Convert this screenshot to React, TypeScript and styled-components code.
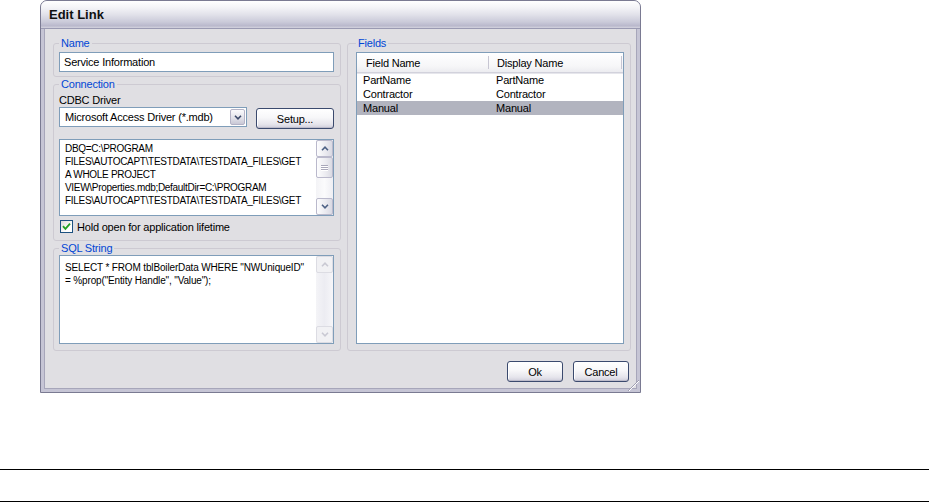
import React from 'react';
import styled, { createGlobalStyle } from 'styled-components';

const GlobalStyle = createGlobalStyle`
  html, body {
    margin: 0;
    padding: 0;
    background: #fff;
  }
  body {
    font-family: "Liberation Sans", Arial, sans-serif;
    font-size: 11px;
    letter-spacing: -0.2px;
    color: #000;
  }
`

const Page = styled.div`
  width: 929px;
  height: 502px;
  overflow: hidden;
`

const Window = styled.div`
  position: relative;
  margin-left: 40px;
  width: 601px;
  height: 393px;
  box-sizing: border-box;
  border: 1px solid #7a7a92;
  border-radius: 7px 7px 0 0;
  background: #c6c5d5;
  display: flex;
  flex-direction: column;
  overflow: hidden;
`

const TitleBar = styled.div`
  flex: none;
  height: 27px;
  display: flex;
  align-items: center;
  padding-left: 8px;
  border-bottom: 1px solid #9a9ab2;
  background: linear-gradient(to bottom, #ffffff 0%, #f3f3f7 25%, #e2e2ea 50%, #cacad9 78%, #b9b8cc 92%, #d4d4df 100%);
  font-weight: bold;
  font-size: 13px;
  letter-spacing: 0;
  color: #101010;
`

const Body = styled.div`
  flex: 1;
  margin: 0 3px 3px 3px;
  background: #e0dfe3;
  border: 1px solid #a7a6ba;
  border-top: none;
  padding: 8px 5px 0 8px;
  display: flex;
  flex-direction: column;
`

const Columns = styled.div`
  display: grid;
  grid-template-columns: 288px 284px;
  column-gap: 6px;
  height: 314px;
`

const Column = styled.div`
  display: flex;
  flex-direction: column;
  gap: 1px;
  min-height: 0;
`

const Group = styled.fieldset<{ $fill?: boolean; $pad?: string }>`
  margin: 0;
  min-width: 0;
  border: 1px solid #cdcad2;
  border-radius: 3px;
  padding: ${p => p.$pad ?? '0 6px 4px 5px'};
  display: flex;
  flex-direction: column;
  flex: ${p => (p.$fill ? '1' : 'none')};
  min-height: 0;
`

const Legend = styled.legend`
  color: #0046d5;
  padding: 0 2px;
  margin-left: 0;
  line-height: 13px;
`

const TextInput = styled.div`
  margin-top: 2px;
  height: 20px;
  box-sizing: border-box;
  border: 1px solid #7f9db9;
  background: #fff;
  display: flex;
  align-items: center;
  padding-left: 4px;
`

const Label = styled.div`
  margin-top: 3px;
  line-height: 13px;
`

const DriverRow = styled.div`
  display: flex;
  align-items: flex-start;
  height: 22px;
`

const Select = styled.div`
  width: 188px;
  height: 20px;
  box-sizing: border-box;
  border: 1px solid #7f9db9;
  background: #fff;
  display: flex;
  align-items: center;
  padding: 1px;
`

const SelectText = styled.div`
  flex: 1;
  padding-left: 4px;
  white-space: nowrap;
  overflow: hidden;
`

const DropButton = styled.div`
  width: 15px;
  height: 16px;
  box-sizing: border-box;
  border: 1px solid #b4b3c6;
  border-radius: 2px;
  background: linear-gradient(to bottom, #fbfbfd, #e3e3ea 55%, #c9c8d6);
  display: flex;
  align-items: center;
  justify-content: center;
`

const Button = styled.button<{ $w: number; $top?: number }>`
  width: ${p => p.$w}px;
  height: 21px;
  margin-top: ${p => p.$top ?? 0}px;
  padding: 0;
  font: inherit;
  letter-spacing: inherit;
  color: #000;
  border: 1px solid #3b4a6e;
  border-radius: 3px;
  background: linear-gradient(to bottom, #ffffff 0%, #f7f7f9 45%, #e6e5ec 80%, #cfcedb 100%);
  box-shadow: inset 0 -1px 0 #bdbccb, inset 1px 0 0 #fff;
`

const SetupButton = styled(Button)`
  margin-left: auto;
`

const TextBox = styled.div<{ $h?: number; $fill?: boolean; $top: number }>`
  margin-top: ${p => p.$top}px;
  height: ${p => (p.$h ? `${p.$h}px` : 'auto')};
  flex: ${p => (p.$fill ? '1' : 'none')};
  box-sizing: border-box;
  border: 1px solid #7f9db9;
  background: #fff;
  display: flex;
  min-height: 0;
`

const TextLines = styled.div<{ $padTop: number; $size?: number; $spacing?: number }>`
  flex: 1;
  min-width: 0;
  overflow: hidden;
  padding: ${p => p.$padTop}px 2px 0 5px;
  line-height: 13px;
  font-size: ${p => p.$size ?? 11}px;
  letter-spacing: ${p => p.$spacing ?? -0.2}px;
  white-space: nowrap;
`

const ScrollBar = styled.div<{ $disabled?: boolean }>`
  width: 17px;
  flex: none;
  display: flex;
  flex-direction: column;
  background: ${p => (p.$disabled
    ? 'linear-gradient(to right, #f4f4f7, #ececf2 50%, #f6f6f9)'
    : 'linear-gradient(to right, #f3f3f6, #fbfbfc 50%, #eeeef3)')};
`

const ScrollButton = styled.div<{ $disabled?: boolean }>`
  height: 17px;
  box-sizing: border-box;
  border: 1px solid ${p => (p.$disabled ? '#dcdce3' : '#bab9cc')};
  border-radius: 2px;
  background: ${p => (p.$disabled
    ? '#f1f1f4'
    : 'linear-gradient(to right, #fdfdfe, #e9e9ef 60%, #d9d9e3)')};
  display: flex;
  align-items: center;
  justify-content: center;
`

const Thumb = styled.div`
  height: 21px;
  box-sizing: border-box;
  border: 1px solid #bab9cc;
  border-radius: 2px;
  background: linear-gradient(to right, #fdfdfe, #ebebf0 60%, #dadae3);
  display: flex;
  flex-direction: column;
  align-items: center;
  justify-content: center;
  gap: 1px;
`

const GripLine = styled.div`
  width: 7px;
  height: 1px;
  background: #a9a8ba;
  box-shadow: 0 1px 0 #fff;
`

const Track = styled.div`
  flex: 1;
`

const CheckRow = styled.div`
  margin-top: 4px;
  display: flex;
  align-items: center;
  gap: 4px;
  height: 13px;
  padding-left: 1px;
`

const CheckBox = styled.div`
  width: 13px;
  height: 13px;
  box-sizing: border-box;
  border: 1px solid #1c5180;
  background: linear-gradient(135deg, #dcdcd7, #ffffff 70%);
  display: flex;
  align-items: center;
  justify-content: center;
`

const ListView = styled.div`
  margin-top: 2px;
  flex: 1;
  border: 1px solid #7f9db9;
  background: #fff;
  display: flex;
  flex-direction: column;
`

const Header = styled.div`
  height: 19px;
  display: grid;
  grid-template-columns: 132px 133px;
  background: linear-gradient(to bottom, #ffffff, #f6f6f8 70%, #ececf0);
  border-bottom: 1px solid #d2d2dc;
  box-shadow: 0 1px 0 #e6e6ec;
`

const HeaderCell = styled.div<{ $pad: number }>`
  display: flex;
  align-items: center;
  padding-left: ${p => p.$pad}px;
  border-right: 1px solid #c7c6d3;
  margin: 3px 0;
`

const Row = styled.div<{ $selected?: boolean }>`
  height: 14px;
  display: grid;
  grid-template-columns: 133px 133px;
  align-items: center;
  background: ${p => (p.$selected ? '#b2b4bf' : 'transparent')};
`

const Cell = styled.div`
  padding-left: 6px;
  white-space: nowrap;
`

const Footer = styled.div`
  display: flex;
  justify-content: flex-end;
  gap: 10px;
  margin-top: 10px;
  padding-right: 2px;
`

const Grip = styled.svg`
  position: absolute;
  right: 1px;
  bottom: 1px;
`

const Rule = styled.div<{ $gap: number }>`
  margin-top: ${p => p.$gap}px;
  border-top: 1px solid #000;
`

const Chevron = ({ up, color = '#4d6185' }: { up?: boolean; color?: string }) => (
  <svg width="8" height="5" viewBox="0 0 8 5">
    <path
      d={up ? 'M1 4.2 L4 1.2 L7 4.2' : 'M1 0.8 L4 3.8 L7 0.8'}
      fill="none"
      stroke={color}
      strokeWidth="1.6"
    />
  </svg>
)

const fields = [
  { name: 'PartName', display: 'PartName' },
  { name: 'Contractor', display: 'Contractor' },
  { name: 'Manual', display: 'Manual', selected: true },
]

const connectionLines = [
  'DBQ=C:\\PROGRAM',
  'FILES\\AUTOCAPT\\TESTDATA\\TESTDATA_FILES\\GET',
  'A WHOLE PROJECT',
  'VIEW\\Properties.mdb;DefaultDir=C:\\PROGRAM',
  'FILES\\AUTOCAPT\\TESTDATA\\TESTDATA_FILES\\GET',
]

const sqlLines = [
  'SELECT * FROM tblBoilerData WHERE "NWUniqueID"',
  '= %prop("Entity Handle", "Value");',
]

export default function App() {
  return (
    <Page>
      <GlobalStyle />
      <Window>
        <TitleBar>Edit Link</TitleBar>
        <Body>
          <Columns>
            <Column>
              <Group>
                <Legend>Name</Legend>
                <TextInput>Service Information</TextInput>
              </Group>

              <Group $pad="0 6px 7px 5px">
                <Legend>Connection</Legend>
                <Label>CDBC Driver</Label>
                <DriverRow>
                  <Select>
                    <SelectText>Microsoft Access Driver (*.mdb)</SelectText>
                    <DropButton><Chevron color="#3c4a6a" /></DropButton>
                  </Select>
                  <SetupButton $w={78} $top={1}>Setup...</SetupButton>
                </DriverRow>
                <TextBox $top={10} $h={77}>
                  <TextLines $padTop={2} $size={10} $spacing={-0.3}>
                    {connectionLines.map((l, i) => <div key={i}>{l}</div>)}
                  </TextLines>
                  <ScrollBar>
                    <ScrollButton><Chevron up /></ScrollButton>
                    <Thumb><GripLine /><GripLine /><GripLine /></Thumb>
                    <Track />
                    <ScrollButton><Chevron /></ScrollButton>
                  </ScrollBar>
                </TextBox>
                <CheckRow>
                  <CheckBox>
                    <svg width="9" height="9" viewBox="0 0 9 9">
                      <path d="M1 4.2 L3.4 6.8 L8 1.6" fill="none" stroke="#21a121" strokeWidth="1.8" />
                    </svg>
                  </CheckBox>
                  Hold open for application lifetime
                </CheckRow>
              </Group>

              <Group $fill $pad="0 6px 6px 5px">
                <Legend>SQL String</Legend>
                <TextBox $top={0} $fill>
                  <TextLines $padTop={5} $size={10} $spacing={-0.15}>
                    {sqlLines.map((l, i) => <div key={i}>{l}</div>)}
                  </TextLines>
                  <ScrollBar $disabled>
                    <ScrollButton $disabled><Chevron up color="#c9c9d3" /></ScrollButton>
                    <Track />
                    <ScrollButton $disabled><Chevron color="#c9c9d3" /></ScrollButton>
                  </ScrollBar>
                </TextBox>
              </Group>
            </Column>

            <Column>
              <Group $fill $pad="0 6px 6px 8px">
                <Legend>Fields</Legend>
                <ListView>
                  <Header>
                    <HeaderCell $pad={9}>Field Name</HeaderCell>
                    <HeaderCell $pad={8}>Display Name</HeaderCell>
                  </Header>
                  {fields.map(f => (
                    <Row key={f.name} $selected={f.selected}>
                      <Cell>{f.name}</Cell>
                      <Cell>{f.display}</Cell>
                    </Row>
                  ))}
                </ListView>
              </Group>
            </Column>
          </Columns>

          <Footer>
            <Button $w={56}>Ok</Button>
            <Button $w={56}>Cancel</Button>
          </Footer>
        </Body>
        <Grip width="12" height="12" viewBox="0 0 12 12">
          {[0, 4, 8].map(o => (
            <g key={o}>
              <line x1={12 - o} y1={1 + o} x2={1 + o} y2={12 - o} stroke="#9f9eb2" strokeWidth="1" />
              <line x1={12 - o} y1={2 + o} x2={2 + o} y2={12 - o} stroke="#fff" strokeWidth="1" />
            </g>
          ))}
        </Grip>
      </Window>
      <Rule $gap={76} />
      <Rule $gap={31} />
    </Page>
  );
}
